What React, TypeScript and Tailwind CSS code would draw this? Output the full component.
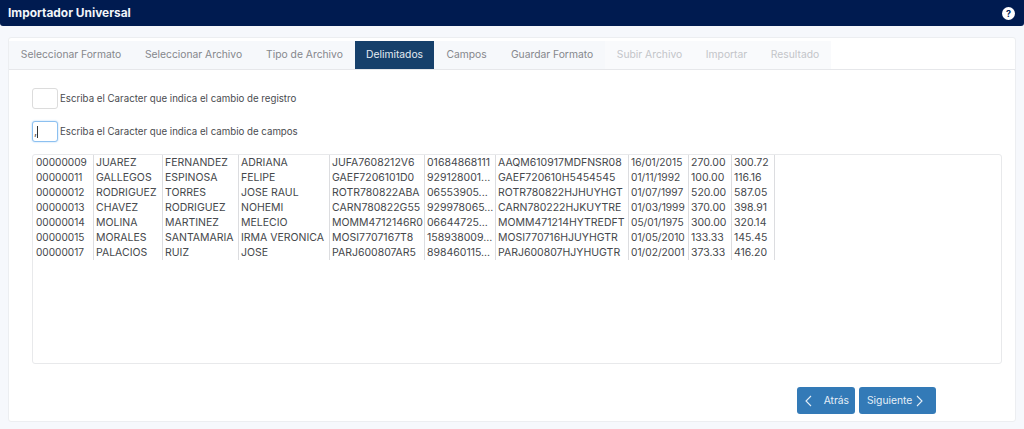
const font = "font-['Inter','Noto_Sans',sans-serif]";

const tabs = [
  { label: "Seleccionar Formato", w: "w-[124px]", state: "normal" },
  { label: "Seleccionar Archivo", w: "w-[121px]", state: "normal" },
  { label: "Tipo de Archivo", w: "w-[101px]", state: "normal" },
  { label: "Delimitados", w: "w-[79px]", state: "active" },
  { label: "Campos", w: "w-[65px]", state: "normal" },
  { label: "Guardar Formato", w: "w-[106px]", state: "normal" },
  { label: "Subir Archivo", w: "w-[89px]", state: "disabled" },
  { label: "Importar", w: "w-[65px]", state: "disabled" },
  { label: "Resultado", w: "w-[72px]", state: "disabled" },
];

const columns = [
  { w: "w-[61px]", pad: "pl-[3px]", size: "text-[10.1px]", cells: ["00000009", "00000011", "00000012", "00000013", "00000014", "00000015", "00000017"] },
  { w: "w-[69px]", pad: "pl-[2px]", size: "text-[10.5px]", cells: ["JUAREZ", "GALLEGOS", "RODRIGUEZ", "CHAVEZ", "MOLINA", "MORALES", "PALACIOS"] },
  { w: "w-[76px]", pad: "pl-[2px]", size: "text-[10.5px]", cells: ["FERNANDEZ", "ESPINOSA", "TORRES", "RODRIGUEZ", "MARTINEZ", "SANTAMARIA", "RUIZ"] },
  { w: "w-[91px]", pad: "pl-[2px]", size: "text-[10.5px]", cells: ["ADRIANA", "FELIPE", "JOSE RAUL", "NOHEMI", "MELECIO", "IRMA VERONICA", "JOSE"] },
  { w: "w-[95px]", pad: "pl-[2px]", size: "text-[10.5px]", cells: ["JUFA7608212V6", "GAEF7206101D0", "ROTR780822ABA", "CARN780822G55", "MOMM4712146R0", "MOSI7707167T8", "PARJ600807AR5"] },
  { w: "w-[71px]", pad: "pl-[2px]", size: "text-[10.5px]", cells: ["01684868111", "929128001...", "06553905...", "929978065...", "06644725...", "158938009...", "898460115..."] },
  { w: "w-[133px]", pad: "pl-[2px]", size: "text-[10.5px]", cells: ["AAQM610917MDFNSR08", "GAEF720610H5454545", "ROTR780822HJHUYHGT", "CARN780222HJKUYTRE", "MOMM471214HYTREDFT", "MOSI770716HJUYHGTR", "PARJ600807HJYHUGTR"] },
  { w: "w-[60px]", pad: "pl-[2px]", size: "text-[10.2px]", cells: ["16/01/2015", "01/11/1992", "01/07/1997", "01/03/1999", "05/01/1975", "01/05/2010", "01/02/2001"] },
  { w: "w-[43px]", pad: "pl-[2px]", size: "text-[10.5px]", cells: ["270.00", "100.00", "520.00", "370.00", "300.00", "133.33", "373.33"] },
  { w: "w-[43px]", pad: "pl-[2px]", size: "text-[10.5px]", cells: ["300.72", "116.16", "587.05", "398.91", "320.14", "145.45", "416.20"] },
];

function Tab({ label, w, state }: { label: string; w: string; state: string }) {
  const cls =
    state === "active"
      ? "bg-[#16406b] text-[#e4ebf2]"
      : state === "disabled"
        ? "bg-[#f9fafc] text-[#c3c5c9]"
        : "bg-[#f6f8fb] text-[#85878c]";
  return (
    <div className={`${w} h-[28px] flex items-center justify-center text-[10.3px] whitespace-nowrap ${cls}`}>{label}</div>
  );
}

function CharField({ label, focused, value }: { label: string; focused?: boolean; value?: string }) {
  return (
    <div className="flex items-center h-[21px]">
      <div
        className={`w-[26px] h-[21px] rounded-[3px] bg-white flex items-center text-[11px] leading-none text-[#444] pl-[1px] border ${
          focused ? "border-[#8cc0f0] shadow-[0_0_2px_#a8d0f5]" : "border-[#dcdcdc]"
        }`}
      >
        {value}
        {focused && <span className="w-px h-[12px] bg-[#333]" />}
      </div>
      <span className="ml-[2px] pt-[2px] text-[9.7px] text-[#4a4c50] whitespace-nowrap">{label}</span>
    </div>
  );
}

export default function App() {
  return (
    <div className={`w-[1024px] h-[429px] overflow-hidden bg-[#f6f8fc] flex flex-col ${font}`}>
      <header className="h-[26px] shrink-0 bg-[#001b50] rounded-b-[3px] flex items-center justify-between pl-[8px] pr-[9px]">
        <span className="text-[11.9px] font-bold text-[#f2f5f9]">Importador Universal</span>
        <span className="w-[13px] h-[13px] rounded-full bg-white flex items-center justify-center text-[9px] leading-none font-bold text-[#001b50]">?</span>
      </header>

      <main className="mt-[11px] mx-[8px] h-[385px] bg-white border border-[#eceef1] rounded-[3px] flex flex-col">
        <nav className="mt-[3px] h-[28px] shrink-0 flex border-b border-[#e6e7ea] box-content">
          {tabs.map((t) => (
            <Tab key={t.label} {...t} />
          ))}
        </nav>

        <section className="pl-[23px] pr-[13px] pt-[18px] flex flex-col flex-1">
          <div className="flex flex-col gap-[12px]">
            <CharField label="Escriba el Caracter que indica el cambio de registro" />
            <CharField label="Escriba el Caracter que indica el cambio de campos" focused value="," />
          </div>

          <div className="mt-[12px] h-[210px] border border-[#e8e9eb] rounded-[3px] flex items-start">
            {columns.map((c, i) => (
              <div key={i} className={`${c.w} shrink-0 border-r border-[#dcdde0] ${c.pad} overflow-hidden`}>
                {c.cells.map((v) => (
                  <div key={v + i} className={`h-[15px] leading-[15px] ${c.size} text-[#45474b] whitespace-nowrap`}>
                    {v}
                  </div>
                ))}
              </div>
            ))}
          </div>

          <div className="mt-[23px] flex justify-end gap-[4px] pr-[66px]">
            <button className="w-[58px] h-[27px] rounded-[3px] bg-[#337ab7] text-[#e6eff7] text-[10.3px] flex items-center justify-between pl-[7px] pr-[6px]">
              <svg width="8" height="12" viewBox="0 0 8 12" fill="none" stroke="currentColor" strokeWidth="1.1">
                <path d="M7 1 L2 6 L7 11" />
              </svg>
              <span>Atrás</span>
            </button>
            <button className="w-[77px] h-[27px] rounded-[3px] bg-[#337ab7] text-[#e6eff7] text-[10.3px] flex items-center justify-between pl-[8px] pr-[12px]">
              <span>Siguiente</span>
              <svg width="8" height="12" viewBox="0 0 8 12" fill="none" stroke="currentColor" strokeWidth="1.1">
                <path d="M1 1 L6 6 L1 11" />
              </svg>
            </button>
          </div>
        </section>
      </main>
    </div>
  );
}
